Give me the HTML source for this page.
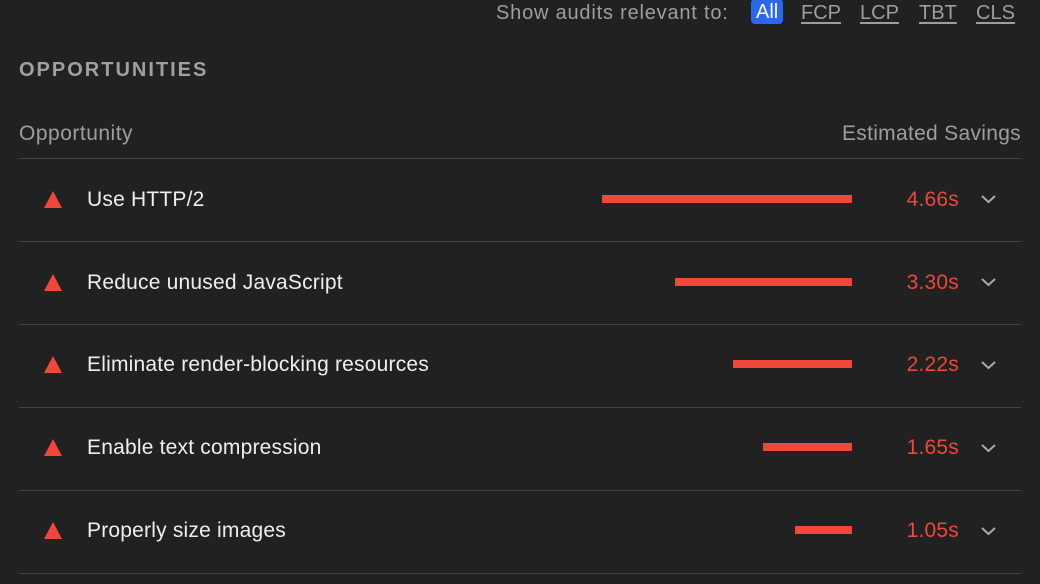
<!DOCTYPE html><html><head><style>
body{margin:0;width:1040px;height:584px;background:#212121;font-family:"Liberation Sans",sans-serif;position:relative;overflow:hidden}
.a{position:absolute;white-space:nowrap}
.f{top:1px;font-size:20px;color:#9e9e9e;line-height:24px}
.f u{color:#9e9e9e;text-decoration:underline;text-underline-offset:3px}
.all{background:#2b68f0;color:#fff;border-radius:4px;padding:0 5px;top:-1px;height:25px;line-height:27px}
.line{position:absolute;left:19px;width:1002px;height:1px;background:#424242}
.tri{position:absolute;left:44px;width:0;height:0;border-left:9px solid transparent;border-right:9px solid transparent;border-bottom:17px solid #f0463b}
.t{left:87px;font-size:21px;letter-spacing:0.2px;color:#eee}
.bar{position:absolute;height:8px;background:#f0463b;right:188px}
.v{right:81px;font-size:21px;letter-spacing:0.2px;color:#f0463b;text-align:right}
.ch{position:absolute;left:980px}
</style></head><body>
<div class="a f" style="left:496px;letter-spacing:0.8px">Show audits relevant to:</div>
<div class="a f all" style="left:751px">All</div>
<div class="a f" style="left:801px"><u>FCP</u></div>
<div class="a f" style="left:860px"><u>LCP</u></div>
<div class="a f" style="left:919px"><u>TBT</u></div>
<div class="a f" style="left:976px"><u>CLS</u></div>
<div class="a" style="left:19px;top:59px;font-size:20px;letter-spacing:2px;color:#a0a0a0;font-weight:bold">OPPORTUNITIES</div>
<div class="a" style="left:19px;top:122px;font-size:21px;letter-spacing:0.5px;color:#9e9e9e">Opportunity</div>
<div class="a" style="right:19px;top:122px;font-size:21px;letter-spacing:0.3px;color:#9e9e9e">Estimated Savings</div>
<div class="line" style="top:158px"></div>

<div class="tri" style="top:191px"></div><div class="a t" style="top:188px">Use HTTP/2</div><div class="bar" style="top:195px;width:250px"></div><div class="a v" style="top:188px">4.66s</div>
<svg class="ch" style="top:193px" width="17" height="12"><path d="M2 3l6.5 6 6.5-6" stroke="#aaa" stroke-width="2" fill="none"/></svg>
<div class="line" style="top:241px"></div>

<div class="tri" style="top:274px"></div><div class="a t" style="top:271px">Reduce unused JavaScript</div><div class="bar" style="top:278px;width:177px"></div><div class="a v" style="top:271px">3.30s</div>
<svg class="ch" style="top:276px" width="17" height="12"><path d="M2 3l6.5 6 6.5-6" stroke="#aaa" stroke-width="2" fill="none"/></svg>
<div class="line" style="top:324px"></div>

<div class="tri" style="top:356px"></div><div class="a t" style="top:353px">Eliminate render-blocking resources</div><div class="bar" style="top:360px;width:119px"></div><div class="a v" style="top:353px">2.22s</div>
<svg class="ch" style="top:359px" width="17" height="12"><path d="M2 3l6.5 6 6.5-6" stroke="#aaa" stroke-width="2" fill="none"/></svg>
<div class="line" style="top:407px"></div>

<div class="tri" style="top:439px"></div><div class="a t" style="top:436px">Enable text compression</div><div class="bar" style="top:443px;width:89px"></div><div class="a v" style="top:436px">1.65s</div>
<svg class="ch" style="top:442px" width="17" height="12"><path d="M2 3l6.5 6 6.5-6" stroke="#aaa" stroke-width="2" fill="none"/></svg>
<div class="line" style="top:490px"></div>

<div class="tri" style="top:522px"></div><div class="a t" style="top:519px">Properly size images</div><div class="bar" style="top:526px;width:57px"></div><div class="a v" style="top:519px">1.05s</div>
<svg class="ch" style="top:525px" width="17" height="12"><path d="M2 3l6.5 6 6.5-6" stroke="#aaa" stroke-width="2" fill="none"/></svg>
<div class="line" style="top:573px"></div>
</body></html>
